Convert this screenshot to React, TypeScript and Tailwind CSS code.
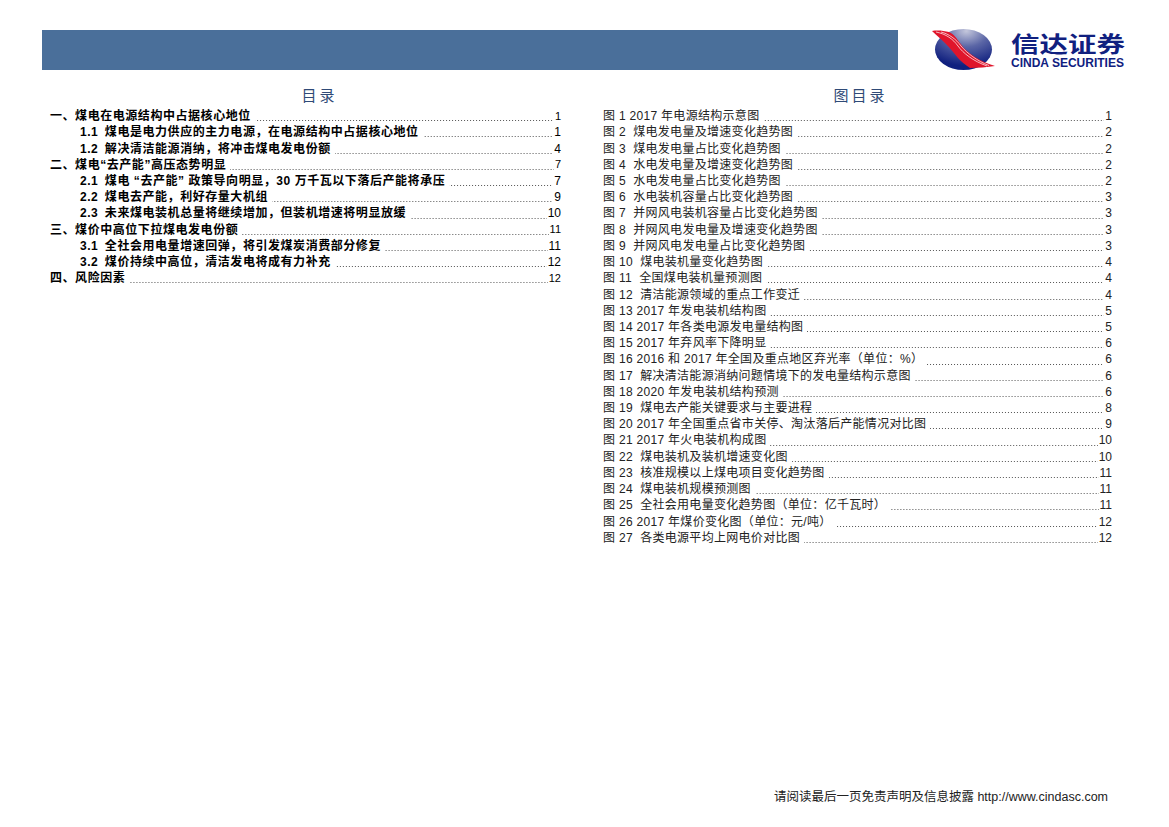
const cjk = { fontFamily: '"Liberation Sans", "Noto Sans CJK SC", sans-serif' };

const sections = [
  { num: '', label: '一、煤电在电源结构中占据核心地位', page: '1' },
  { num: '1.1', label: '煤电是电力供应的主力电源，在电源结构中占据核心地位', page: '1' },
  { num: '1.2', label: '解决清洁能源消纳，将冲击煤电发电份额', page: '4' },
  { num: '', label: '二、煤电“去产能”高压态势明显', page: '7' },
  { num: '2.1', label: '煤电 “去产能” 政策导向明显，30 万千瓦以下落后产能将承压', page: '7' },
  { num: '2.2', label: '煤电去产能，利好存量大机组', page: '9' },
  { num: '2.3', label: '未来煤电装机总量将继续增加，但装机增速将明显放缓', page: '10' },
  { num: '', label: '三、煤价中高位下拉煤电发电份额', page: '11' },
  { num: '3.1', label: '全社会用电量增速回弹，将引发煤炭消费部分修复', page: '11' },
  { num: '3.2', label: '煤价持续中高位，清洁发电将成有力补充', page: '12' },
  { num: '', label: '四、风险因素', page: '12' },
];

const figures = [
  ['图 1 2017 年电源结构示意图', '1'],
  ['图 2  煤电发电量及增速变化趋势图', '2'],
  ['图 3  煤电发电量占比变化趋势图', '2'],
  ['图 4  水电发电量及增速变化趋势图', '2'],
  ['图 5  水电发电量占比变化趋势图', '2'],
  ['图 6  水电装机容量占比变化趋势图', '3'],
  ['图 7  并网风电装机容量占比变化趋势图', '3'],
  ['图 8  并网风电发电量及增速变化趋势图', '3'],
  ['图 9  并网风电发电量占比变化趋势图', '3'],
  ['图 10  煤电装机量变化趋势图', '4'],
  ['图 11  全国煤电装机量预测图', '4'],
  ['图 12  清洁能源领域的重点工作变迁', '4'],
  ['图 13 2017 年发电装机结构图', '5'],
  ['图 14 2017 年各类电源发电量结构图', '5'],
  ['图 15 2017 年弃风率下降明显', '6'],
  ['图 16 2016 和 2017 年全国及重点地区弃光率（单位：%）', '6'],
  ['图 17  解决清洁能源消纳问题情境下的发电量结构示意图', '6'],
  ['图 18 2020 年发电装机结构预测', '6'],
  ['图 19  煤电去产能关键要求与主要进程', '8'],
  ['图 20 2017 年全国重点省市关停、淘汰落后产能情况对比图', '9'],
  ['图 21 2017 年火电装机构成图', '10'],
  ['图 22  煤电装机及装机增速变化图', '10'],
  ['图 23  核准规模以上煤电项目变化趋势图', '11'],
  ['图 24  煤电装机规模预测图', '11'],
  ['图 25  全社会用电量变化趋势图（单位：亿千瓦时）', '11'],
  ['图 26 2017 年煤价变化图（单位：元/吨）', '12'],
  ['图 27  各类电源平均上网电价对比图', '12'],
];

function Leader({ children, page, className, pageClass }: { children: React.ReactNode; page: string; className: string; pageClass: string }) {
  return (
    <div className={`flex h-[16.23px] items-center whitespace-pre leading-none ${className}`}>
      {children}
      {/* dotted leader */}
      <span className="mb-[3px] ml-[4px] mr-[1px] h-[1px] min-w-0 flex-1 self-end bg-[linear-gradient(to_right,#555_1px,transparent_1px)] bg-[length:3px_1px] bg-right bg-repeat-x" />
      <span className={pageClass}>{page}</span>
    </div>
  );
}

function Logo() {
  return (
    <svg width="66" height="42" viewBox="0 0 66 42" className="shrink-0">
      <defs>
        <radialGradient id="globe" cx="0.55" cy="0.05" r="0.85">
          <stop offset="0" stopColor="#c4c7dc" />
          <stop offset="0.45" stopColor="#5b66a6" />
          <stop offset="1" stopColor="#10207f" />
        </radialGradient>
      </defs>
      <ellipse cx="32.5" cy="20.5" rx="28.5" ry="20.5" fill="url(#globe)" />
      <path d="M1 2 C7 1 13 2 18 3 C23 5 26 10 29 14 C33 20 38 24 44 28 C50 32 57 35 64 37 C56 38 47 39 39 39 C34 36 30 32 27 29 C23 24 19 19 14 14 C10 10 5 6 1 2 Z" fill="#e0152b" />
      <path d="M5 3 C15 5 22 10 27 17 C32 24 42 32 56 37" fill="none" stroke="#fff" strokeWidth="0.7" />
      <path d="M10 3 C18 5 25 10 30 17 C36 24 46 32 58 36.5" fill="none" stroke="#fff" strokeWidth="0.7" />
    </svg>
  );
}

export default function App() {
  return (
    <div className="relative flex h-[827px] w-[1169px] flex-col overflow-hidden bg-white pt-[30px] text-black" style={cjk}>
      {/* Header */}
      <div className="flex h-[40px] items-center">
        <div className="ml-[42px] h-[40px] w-[856px] bg-[#4a6f9a]" />
        <div className="ml-[33px] flex items-center gap-[14px]">
          <Logo />
          <div className="flex flex-col text-[#10207f]">
            <span className="-mb-[3px] h-[28px] origin-center -translate-y-[2px] scale-y-[0.74] whitespace-nowrap text-[28.5px] font-bold leading-[28px]">信达证券</span>
            <span className="h-[10px] whitespace-nowrap text-[12px] font-bold leading-[10px]">CINDA SECURITIES</span>
          </div>
        </div>
      </div>

      {/* Contents */}
      <div className="mt-[17px] flex">
        <div className="ml-[50px] w-[511px]">
          <h2 className="mb-[3px] h-[18px] pl-[28px] text-center text-[15px] font-normal leading-[18px] tracking-[3px] text-[#2f4a77]">目录</h2>
          {sections.map((s) => (
            <Leader
              key={s.label}
              page={s.page}
              pageClass={s.num ? 'font-normal tracking-normal' : 'font-normal tracking-normal text-[11px]'}
              className={`text-[12px] font-bold tracking-[0.55px] ${s.num ? 'pl-[30px]' : ''}`}
            >
              {s.num && <span className="mr-[6.5px]">{s.num}</span>}
              <span>{s.label}</span>
            </Leader>
          ))}
        </div>
        <div className="ml-[42px] w-[509px]">
          <h2 className="mb-[3px] h-[18px] pl-[6px] text-center text-[15px] font-normal leading-[18px] tracking-[3px] text-[#2f4a77]">图目录</h2>
          {figures.map(([label, page]) => (
            <Leader key={label} page={page} pageClass="tracking-normal" className="text-[12px] tracking-[0.3px] text-[#222]">
              {label}
            </Leader>
          ))}
        </div>
      </div>

      {/* Footer */}
      <div className="mb-[23px] mr-[61px] mt-auto text-right text-[12.5px] leading-[14px] text-[#222]">
        请阅读最后一页免责声明及信息披露  http://www.cindasc.com
      </div>
    </div>
  );
}
